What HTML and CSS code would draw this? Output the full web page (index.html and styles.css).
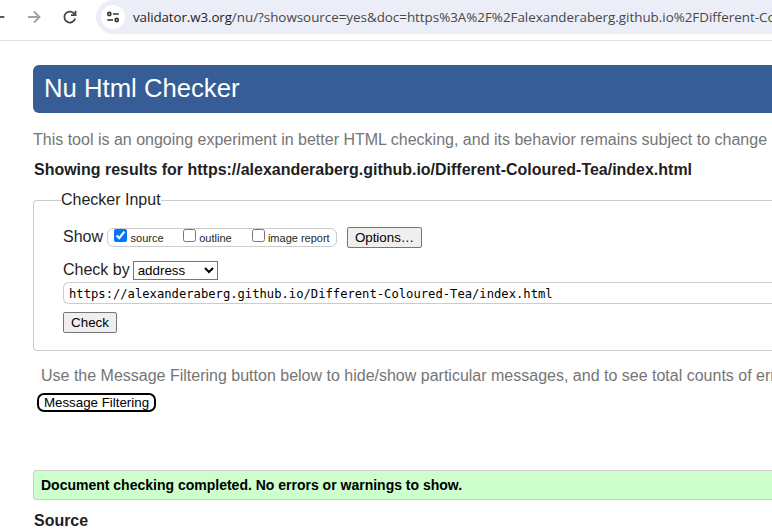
FILE: index.html
```
<!DOCTYPE html>
<html lang="en">
<head>
<meta charset="utf-8">
<title>Nu Html Checker</title>
<link rel="stylesheet" href="styles.css">
</head>
<body>
<div class="toolbar">
  <svg class="nav" width="96" height="34" viewBox="0 0 96 34" fill="none" stroke-width="1.8">
    <path d="M-6 17H4.300" stroke="#474747"/>
    <path d="M28 17H39M34 11.500L39.500 17L34 22.500" stroke="#a3a3a3"/>
    <path d="M74.600 14.200A5.500 5.500 0 1 0 75.200 18.500" stroke="#474747"/>
    <path d="M75.500 10.800V15.200H71" stroke="#474747"/>
  </svg>
  <div class="omnibox">
    <span class="site-info">
      <svg width="14" height="14" viewBox="0 0 14 14" fill="none" stroke="#303134" stroke-width="1.6">
        <circle cx="3.300" cy="4" r="1.600"/><path d="M7 4H12.700M1.300 10H7"/><circle cx="10.700" cy="10" r="1.600"/>
      </svg>
    </span>
    <span class="url"><span class="host">validator.w3.org</span>/nu/?showsource=yes&amp;doc=https%3A%2F%2Falexanderaberg.github.io%2FDifferent-Co</span>
  </div>
</div>
<main>
  <h1>Nu Html Checker</h1>
  <p class="intro">This tool is an ongoing experiment in better HTML checking, and its behavior remains subject to change</p>
  <h2>Showing results for https://alexanderaberg.github.io/Different-Coloured-Tea/index.html</h2>
  <fieldset>
    <legend>Checker Input</legend>
    <div class="row show">
      <span>Show</span>
      <div class="checks">
        <label><input type="checkbox" checked>source</label>
        <label><input type="checkbox">outline</label>
        <label><input type="checkbox">image report</label>
      </div>
      <button class="options">Options…</button>
    </div>
    <div class="row by">
      <label for="method">Check by</label>
      <select id="method"><option>address</option></select>
    </div>
    <div class="address">https://alexanderaberg.github.io/Different-Coloured-Tea/index.html</div>
    <button class="check">Check</button>
  </fieldset>
  <p class="hint">Use the Message Filtering button below to hide/show particular messages, and to see total counts of err</p>
  <button class="filter">Message Filtering</button>
  <p class="success">Document checking completed. No errors or warnings to show.</p>
  <h2 class="source">Source</h2>
</main>
</body>
</html>
```
FILE: styles.css
```
* { box-sizing: border-box; }
body {
  margin: 0;
  width: 772px;
  height: 532px;
  overflow: hidden;
  background: #fff;
  color: #1f1f1f;
  font: 16px/20px "Liberation Sans", Arial, sans-serif;
}
.toolbar {
  display: flex;
  height: 41px;
  border-bottom: 1px solid #dedfe0;
  overflow: hidden;
}
.nav { flex: none; }
.omnibox {
  flex: 1;
  min-width: 0;
  display: flex;
  align-items: center;
  height: 34px;
  padding-left: 5px;
  border-radius: 17px 0 0 17px;
  background: #ebeef7;
}
.site-info {
  flex: none;
  display: flex;
  align-items: center;
  justify-content: center;
  width: 24px;
  height: 24px;
  margin-right: 8px;
  border-radius: 50%;
  background: #fff;
}
.url {
  font-family: "Open Sans", "Noto Sans", sans-serif;
  font-size: 13.37px;
  color: #474747;
  white-space: nowrap;
}
.host { color: #1f1f1f; letter-spacing: -0.1px; }
main { padding: 24px 0 0 33px; }
h1 {
  height: 48px;
  margin: 0;
  padding-left: 11px;
  border-radius: 6px 0 0 6px;
  background: #365d95;
  color: #fff;
  font-size: 25.7px;
  font-weight: 400;
  line-height: 47px;
}
p, h2 { margin: 0; white-space: nowrap; }
.intro { margin-top: 17px; color: #757575; }
h2 { margin: 10px 0 0 1px; font-size: 15.98px; }
.source { margin-top: 11px; }
fieldset {
  height: 161px;
  margin: 10px 0 0;
  padding: 17px 0 0 29px;
  border: 1px solid #ccc;
  border-right: 0;
  border-radius: 4px 0 0 4px;
}
legend { margin-left: -2px; padding: 0; }
.row { display: flex; }
.show { height: 22px; }
.checks {
  display: flex;
  width: 230px;
  height: 19px;
  margin: 1px 10px 0 4px;
  border: 1px solid #ccc;
  border-radius: 6px;
  font-size: 11px;
  line-height: 18px;
}
.checks label { display: flex; width: 69px; margin-left: 6px; white-space: nowrap; }
.checks label + label { margin-left: 0; }
.checks label:last-child { width: 85px; }
.checks input { width: 13px; height: 13px; margin: 0 3.5px 0 0; }
.checks label:last-child input { margin: 0 3px 0 0.5px; }
button {
  display: block;
  height: 21px;
  padding: 0;
  border: 1px solid #767676;
  border-radius: 2px;
  background: #efefef;
  color: #000;
  font: 13.333px/19px "Liberation Sans", Arial, sans-serif;
}
.options { width: 75px; }
.by { margin-top: 11px; height: 22px; }
select {
  width: 85px;
  height: 19px;
  margin: 1px 0 0 3px;
  border: 1px solid #767676;
  background: #fff;
  color: #000;
  font: 13.333px "Liberation Sans", Arial, sans-serif;
}
.address {
  height: 22px;
  padding-left: 5px;
  border: 1px solid #ccc;
  border-right: 0;
  border-radius: 6px 0 0 6px;
  color: #000;
  font: 12.18px/22px "DejaVu Sans Mono", monospace;
}
.check { width: 54px; margin-top: 8px; }
.hint { margin: 15px 0 0 8px; color: #757575; overflow: hidden; }
.filter {
  width: 119px;
  height: 19px;
  margin: 7px 0 0 4px;
  border: 2px solid #000;
  border-radius: 7px;
  background: #fff;
  line-height: 15px;
}
.success {
  height: 30px;
  margin-top: 58px;
  padding-left: 7px;
  border: 1px solid #ccc;
  border-right: 0;
  border-radius: 4px 0 0 4px;
  background: #cfc;
  color: #000;
  font-size: 14px;
  font-weight: 700;
  line-height: 28px;
}
```
